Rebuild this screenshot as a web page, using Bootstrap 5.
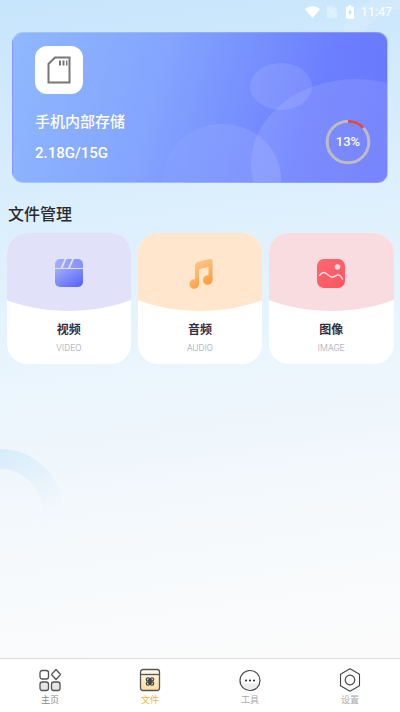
<!doctype html>
<html lang="zh-CN">
<head>
<meta charset="utf-8">
<title>文件管理</title>
<link rel="stylesheet" href="https://cdn.jsdelivr.net/npm/bootstrap@5.3.0/dist/css/bootstrap.min.css">
<style>
html,body{height:100%}
body{font-family:Roboto,"Noto Sans CJK SC",sans-serif;overflow:hidden;background:#fff}
.app-screen{height:712px;background:linear-gradient(172deg,#c7e5fc 0%,#dceffc 30%,#eaf5fd 50%,#f5f9fc 72%,#fbfbfb 92%)}
.deco-ring{position:absolute;left:0;top:448px;width:66px;height:130px}
.deco-top{position:absolute;right:0;top:0;width:70px;height:32px}
.status-bar{height:24px;padding-right:8px;color:#fff;font-size:12.500px;position:relative}
.st-wifi{margin-right:7px}
.st-sim{margin-right:9px}
.st-batt{margin-right:7px}
.banner{margin:8px 12px 0;height:151px;border-radius:11px;background:linear-gradient(105deg,#8fb8fe 0%,#84a4fe 38%,#6c7ffe 78%,#6877fe 100%);overflow:hidden;border:1px solid rgba(255,255,255,.22);color:#fff;padding:13px 22px}
.blob{position:absolute;border-radius:50%}
.blob-a{left:237px;top:30px;width:62px;height:47px;background:rgba(255,255,255,.1)}
.blob-b{left:238px;top:46px;width:210px;height:170px;background:rgba(255,255,255,.1)}
.blob-c{left:150px;top:91px;width:118px;height:110px;background:linear-gradient(90deg,rgba(255,255,255,.03),rgba(255,255,255,.12))}
.sd-tile{width:48px;height:48px;border-radius:12px;background:#fff;position:relative}
.banner-name{font-size:15px;line-height:22px;margin-top:17px;font-weight:500;position:relative}
.banner-size{font-size:15px;line-height:20px;font-weight:500;margin-top:10px;position:relative}
.ring-box{position:absolute;right:16px;top:86px;width:46px;height:46px}
.ring-box svg{position:absolute;inset:0}
.ring-label{font-size:13px;font-weight:500;line-height:46px;text-align:center;position:relative}
.section-title{font-size:16px;line-height:24px;color:#2b2b2f;margin:20px 0 6px 8px;font-weight:500}
.tile-grid{padding:0 6.5px;gap:6.5px;position:relative}
.file-tile{flex:1 1 0;height:131px;border-radius:20px;background:#fff;overflow:hidden;text-align:center}
.tile-head{height:78px;clip-path:ellipse(122px 78px at 50% 0);padding-top:24px}
.tile-video{background:#e1e2fa}
.tile-audio{background:#ffe6cd}
.tile-image{background:#f9dcdf}
.tile-name{font-size:12px;line-height:18px;font-weight:700;color:#2f2f45;margin-top:10px}
.tile-en{font-size:9px;line-height:12px;font-weight:300;color:#9a9ab0;margin-top:3px}
.bottom-nav{height:54px;background:#fff;border-top:1px solid #dedede;position:relative;flex:none}
.nav-cell{flex:1 1 0;text-align:center;padding-top:9px;font-size:9px;line-height:12px;color:#8b8b8b}
.nav-cell svg{display:block;margin:0 auto 2px}
.nav-on{color:#f5b52e}
.nav-dim{color:#aaa}
</style>
</head>
<body>
<div class="app-screen d-flex flex-column position-relative overflow-hidden">
  <svg class="deco-ring" viewBox="0 0 66 130" aria-hidden="true">
    <defs><linearGradient id="rg" x1="0" y1="0" x2=".6" y2="1"><stop offset="0" stop-color="#cfe9fb"/><stop offset=".5" stop-color="#e6f2fb"/><stop offset="1" stop-color="#f6fafd" stop-opacity="0"/></linearGradient></defs>
    <circle cx="0" cy="64" r="53" fill="none" stroke="url(#rg)" stroke-width="20"/>
  </svg>
  <svg class="deco-top" viewBox="0 0 70 32" aria-hidden="true"><circle cx="62" cy="48" r="52" fill="#fff" fill-opacity=".12"/><circle cx="70" cy="50" r="40" fill="#cde8fc"/></svg>

  <main class="flex-grow-1 position-relative">
    <div class="status-bar d-flex align-items-center justify-content-end">
      <svg class="st-wifi" width="15" height="12" viewBox="0 0 15 12"><path d="M0 3.200C4.200-.9 10.800-.9 15 3.200L7.500 12z" fill="#fff"/></svg>
      <svg class="st-sim" width="10" height="12" viewBox="0 0 10 12"><path d="M0 12V0h6.500L10 3.500V12z" fill="#fff" fill-opacity=".3"/><path d="M.5.5l9 11" stroke="#fff" stroke-opacity=".4"/></svg>
      <svg class="st-batt" width="8" height="14" viewBox="0 0 9 15"><path d="M3 0h3v1.500h2a1 1 0 0 1 1 1V14a1 1 0 0 1-1 1H1a1 1 0 0 1-1-1V2.500a1 1 0 0 1 1-1h2z" fill="#fff"/><path d="M5 3.500 2.500 8.500h1.700L3.800 12l2.700-5H4.700z" fill="#b9ddf9"/></svg>
      <span>11:47</span>
    </div>

    <section class="banner card position-relative">
      <span class="blob blob-a"></span><span class="blob blob-b"></span><span class="blob blob-c"></span>
      <div class="sd-tile d-flex align-items-center justify-content-center">
        <svg width="24" height="28" viewBox="0 0 24 28"><path d="M8 1.500h14.500v25H1.500V8z" fill="#fff" stroke="#77777a" stroke-width="2"/><path d="M12 4.500h2v5h-2zM15.500 4.500h2v5h-2zM19 4.500h1.500v5H19z" fill="#77777a"/></svg>
      </div>
      <div class="banner-name">手机内部存储</div>
      <div class="banner-size">2.18G/15G</div>
      <div class="ring-box">
        <svg viewBox="0 0 46 46"><circle cx="23" cy="23" r="20.800" fill="none" stroke="#bdbdbd" stroke-width="3"/><circle cx="23" cy="23" r="20.800" fill="none" stroke="#cf4f5f" stroke-width="3" stroke-dasharray="17 114" transform="rotate(-90 23 23)"/></svg>
        <div class="ring-label">13%</div>
      </div>
    </section>

    <h2 class="section-title">文件管理</h2>

    <div class="tile-grid d-flex">
      <div class="file-tile">
        <div class="tile-head tile-video">
          <svg width="30" height="32" viewBox="0 0 30 32">
            <defs><linearGradient id="vg" x1="0" y1="0" x2="1" y2="1"><stop offset="0" stop-color="#a3adfb"/><stop offset="1" stop-color="#5261f6"/></linearGradient><linearGradient id="vt" x1="0" y1="0" x2="1" y2="0"><stop offset="0" stop-color="#a5aefb"/><stop offset="1" stop-color="#8491f9"/></linearGradient></defs>
            <path d="M1 12h28v13a5 5 0 0 1-5 5H6a5 5 0 0 1-5-5z" fill="url(#vg)"/>
            <path d="M1 11V7a5 5 0 0 1 5-5h4.500L6.500 11zM12.500 2h5.500l-4 9H8.500zM20 2h4a5 5 0 0 1 5 5v4H16z" fill="url(#vt)"/>
          </svg>
        </div>
        <div class="tile-name">视频</div>
        <div class="tile-en">VIDEO</div>
      </div>
      <div class="file-tile">
        <div class="tile-head tile-audio">
          <svg width="30" height="32" viewBox="0 0 30 32">
            <defs><linearGradient id="ag" x1="0" y1="0" x2=".5" y2="1"><stop offset="0" stop-color="#ffd19b"/><stop offset="1" stop-color="#ff9d3e"/></linearGradient></defs>
            <path d="M10 8.500c0-2 1-3 2.500-3.500l12-3c1.500-.4 3 .3 3 2V23a4.800 4.800 0 1 1-4-4.700V9.800L14 12.200V27a4.800 4.800 0 1 1-4-4.700z" fill="url(#ag)"/>
          </svg>
        </div>
        <div class="tile-name">音频</div>
        <div class="tile-en">AUDIO</div>
      </div>
      <div class="file-tile">
        <div class="tile-head tile-image">
          <svg width="30" height="32" viewBox="0 0 30 32">
            <defs><linearGradient id="ig" x1="0" y1="0" x2=".8" y2="1"><stop offset="0" stop-color="#fb6a72"/><stop offset="1" stop-color="#ff5563"/></linearGradient></defs>
            <rect x="1" y="2" width="28" height="29" rx="7" fill="url(#ig)"/>
            <circle cx="21.500" cy="10" r="2.800" fill="#fde1e3"/>
            <path d="M3.500 18.500c3-4 5-3.500 8-1s4.500 3.500 8 1.500 5-.5 7 3" fill="none" stroke="#fde1e3" stroke-width="1.500" stroke-linecap="round"/>
          </svg>
        </div>
        <div class="tile-name">图像</div>
        <div class="tile-en">IMAGE</div>
      </div>
    </div>
  </main>

  <nav class="bottom-nav d-flex">
    <div class="nav-cell">
      <svg width="24" height="24" viewBox="0 0 24 24" fill="none" stroke="#555" stroke-width="1.300">
        <rect x="2" y="2.500" width="8.500" height="8.500" rx="2.200"/>
        <rect x="2" y="14" width="8.500" height="8.500" rx="2.200" fill="#e6e6e6"/>
        <rect x="13.500" y="14" width="8.500" height="8.500" rx="2.200" fill="#e6e6e6"/>
        <path d="M18 1.500l4.500 5-4.500 5-4.500-5z" stroke-linejoin="round"/>
      </svg>
      主页
    </div>
    <div class="nav-cell nav-on">
      <svg width="24" height="24" viewBox="0 0 24 24">
        <defs><linearGradient id="fg" x1="0" y1="0" x2="0" y2="1"><stop offset="0" stop-color="#fffaf0"/><stop offset="1" stop-color="#fbdc9e"/></linearGradient></defs>
        <rect x="2.500" y="1.500" width="19" height="21" rx="2.500" fill="url(#fg)" stroke="#555" stroke-width="1.300"/>
        <path d="M2.500 6.500h19" stroke="#555" stroke-width="1.300"/>
        <g fill="none" stroke="#444" stroke-width="1.200"><circle cx="10" cy="11.500" r="1.700"/><circle cx="14" cy="11.500" r="1.700"/><circle cx="10" cy="15.500" r="1.700"/><circle cx="14" cy="15.500" r="1.700"/></g>
        <path d="M10 11.500l4 4M14 11.500l-4 4" stroke="#444" stroke-width="1.400"/>
      </svg>
      文件
    </div>
    <div class="nav-cell nav-dim">
      <svg width="24" height="24" viewBox="0 0 24 24">
        <circle cx="12" cy="12.500" r="10" fill="#fff" stroke="#444" stroke-width="1.200"/>
        <path d="M3 15.500h18a10 10 0 0 1-18 0z" fill="#ececec"/>
        <circle cx="8" cy="12.500" r="1.100" fill="#333"/><circle cx="12" cy="12.500" r="1.100" fill="#333"/><circle cx="16" cy="12.500" r="1.100" fill="#333"/>
      </svg>
      工具
    </div>
    <div class="nav-cell nav-dim">
      <svg width="24" height="24" viewBox="0 0 24 24" fill="none" stroke="#444" stroke-width="1.100">
        <path d="M12 .8l9.500 5.500v11.400L12 23.200l-9.500-5.500V6.300z" stroke-linejoin="round"/>
        <circle cx="12" cy="12" r="4.800" stroke-width="1.200"/>
      </svg>
      设置
    </div>
  </nav>
</div>
<script src="https://cdn.jsdelivr.net/npm/bootstrap@5.3.0/dist/js/bootstrap.bundle.min.js"></script>
</body>
</html>
